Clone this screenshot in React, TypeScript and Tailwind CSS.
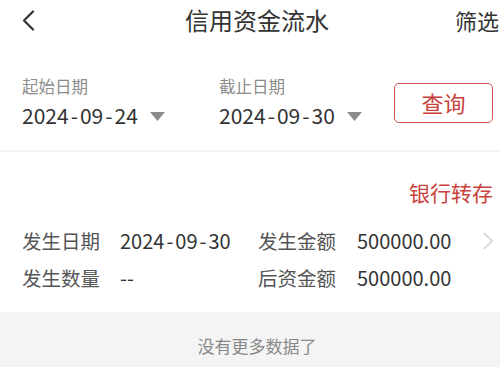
import React from "react";

const font = { fontFamily: '"Noto Sans CJK SC", "Noto Sans", sans-serif' };

function DateText({ value }: { value: string }) {
  const parts = value.split("-");
  return (
    <>
      {parts.map((p, i) => (
        <React.Fragment key={i}>
          {i > 0 && <span className="px-[2px]">-</span>}
          {p}
        </React.Fragment>
      ))}
    </>
  );
}

function Caret() {
  return (
    <svg width="15" height="9" viewBox="0 0 15 9" className="ml-[12px] mt-[2px]">
      <path d="M0 0 H15 L7.5 9 Z" fill="#8c8c8c" />
    </svg>
  );
}

function DateField({ label, value }: { label: string; value: string }) {
  return (
    <div className="flex flex-col">
      <div className="text-[16.5px] leading-[20px] text-[#8c8c8c]">{label}</div>
      <div className="mt-[5px] flex items-center">
        <span className="text-[21px] leading-[28px] text-[#333]">
          <DateText value={value} />
        </span>
        <Caret />
      </div>
    </div>
  );
}

export default function App() {
  return (
    <div className="h-[367px] w-[500px] overflow-hidden bg-white" style={font}>
      <header className="flex h-[40px] items-center whitespace-nowrap">
        <div className="w-[185px] pl-[22px]">
          <svg width="13" height="21" viewBox="0 0 13 21">
            <path d="M11 1.5 L2 10.5 L11 19.5" fill="none" stroke="#333" strokeWidth="2.2" strokeLinecap="round" strokeLinejoin="round" />
          </svg>
        </div>
        <h1 className="text-[24px] leading-[30px] text-[#333]">信用资金流水</h1>
        <span className="ml-[126px] text-[22px] leading-[30px] text-[#333]">筛选</span>
      </header>

      <section className="flex items-center pl-[22px] pr-[7px] pt-[36px] pb-[21px]">
        <div className="w-[197px]">
          <DateField label="起始日期" value="2024-09-24" />
        </div>
        <DateField label="截止日期" value="2024-09-30" />
        <button className="ml-auto flex h-[40px] w-[99px] items-center justify-center rounded-[5px] border border-[#c9524d] text-[22px] text-[#c9413a]">
          查询
        </button>
      </section>
      <div className="h-[2px] bg-[#f5f5f5]" />

      <section className="pl-[22px] pr-[7px] pt-[26px] pb-[20px]">
        <div className="text-right text-[21px] leading-[28px] text-[#c9413a]">银行转存</div>
        <div className="mt-[21px] flex items-center text-[19.5px] leading-[28px]">
          <span className="w-[98px] text-[#555]">发生日期</span>
          <span className="w-[138px] text-[20px] text-[#333]">
            <DateText value="2024-09-30" />
          </span>
          <span className="w-[99px] text-[#555]">发生金额</span>
          <span className="flex-1 text-[20px] text-[#333]">500000.00</span>
          <svg width="10" height="18" viewBox="0 0 10 18">
            <path d="M1 1 L9 9 L1 17" fill="none" stroke="#d0d0d0" strokeWidth="1.5" />
          </svg>
        </div>
        <div className="mt-[9px] flex items-center text-[19.5px] leading-[28px]">
          <span className="w-[98px] text-[#555]">发生数量</span>
          <span className="w-[138px] text-[20px] text-[#333]">--</span>
          <span className="w-[99px] text-[#555]">后资金额</span>
          <span className="flex-1 text-[20px] text-[#333]">500000.00</span>
        </div>
      </section>

      <footer className="h-[55px] bg-[#f4f4f4] pl-[14px] pt-[22px] text-center text-[17px] leading-[24px] text-[#888]">
        没有更多数据了
      </footer>
    </div>
  );
}
